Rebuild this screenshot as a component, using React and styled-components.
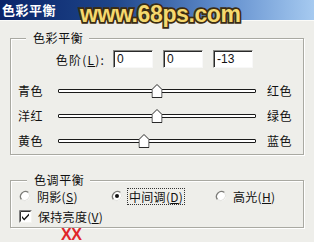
import React from "react";
import styled, { createGlobalStyle } from "styled-components";

const GlobalStyle = createGlobalStyle`
  html, body { margin: 0; padding: 0; background: #eeeeea; }
  body { font-family: "Noto Sans CJK SC", "Liberation Sans", sans-serif; font-size: 12px; color: #111; }
`;

const Window = styled.div`
  position: relative;
  width: 314px;
  height: 242px;
  overflow: hidden;
  background: #eeeeea;
  display: flex;
  flex-direction: column;
`;

const TitleBar = styled.div`
  height: 20px;
  flex: none;
  display: flex;
  align-items: center;
  padding-left: 2px;
  background: linear-gradient(to right, #0a246a 0%, #1d4488 35%, #5f8ccc 70%, #a6caf0 100%);
  border-bottom: 1px solid #fbfbf8;
  color: #fff;
  font-weight: bold;
  font-size: 13px;
  line-height: 20px;
  letter-spacing: 0.5px;
`;

const Watermark = styled.div`
  position: absolute;
  left: 80px;
  top: 1px;
  font-family: "Liberation Sans", Arial, sans-serif;
  font-weight: bold;
  font-size: 23px;
  letter-spacing: -0.4px;
  color: #f5d86e;
  -webkit-text-stroke: 3.5px #3b2c12;
  paint-order: stroke fill;
  pointer-events: none;
`;

const RedMark = styled.div`
  position: absolute;
  left: 61px;
  top: 226px;
  font-family: "Liberation Sans", Arial, sans-serif;
  font-weight: bold;
  font-size: 16px;
  color: #e0262a;
  letter-spacing: -0.5px;
`;

const Body = styled.div`
  padding: 10px 10px 0 10px;
  display: flex;
  flex-direction: column;
  gap: ${(p) => p.$gap}px;
`;

const Group = styled.fieldset`
  margin: 0;
  min-width: 0;
  padding: ${(p) => p.$pad};
  border: 1px solid #a9a9a2;
  box-shadow: inset 1px 1px 0 #ffffff, 1px 1px 0 #ffffff;
`;

const Legend = styled.legend`
  position: relative;
  margin-left: 8px;
  padding: 0 6px 0 7px;
  background: #eeeeea;
  font-size: 12px;
  line-height: 14px;
  letter-spacing: 0.6px;
`;

const LevelsRow = styled.div`
  display: flex;
  align-items: center;
  height: 18px;
  gap: 10px;
`;

const LevelsLabel = styled.span`
  width: 87px;
  text-align: right;
  margin-right: -2px;
  letter-spacing: 1.2px;
  white-space: nowrap;
`;

const Field = styled.div`
  width: 40px;
  height: 18px;
  box-sizing: border-box;
  background: #fff;
  border: 1px solid;
  border-color: #8a8a86 #f8f8f8 #f8f8f8 #8a8a86;
  box-shadow: inset 1px 1px 0 #2a2a2a;
  font-family: "Liberation Sans", Arial, sans-serif;
  font-size: 12px;
  line-height: 16px;
  padding-left: 3px;
  color: #111;
`;

const Sliders = styled.div`
  margin-top: 10px;
  display: flex;
  flex-direction: column;
`;

const SliderRow = styled.div`
  display: grid;
  grid-template-columns: 29px 198px auto;
  column-gap: 11px;
  align-items: center;
  height: 25px;
`;

const Track = styled.div`
  position: relative;
  height: 4px;
  box-sizing: border-box;
  background: #fff;
  border: 1px solid #1a1a1a;
  border-top-width: 1.5px;
  border-radius: 1px;
`;

const Thumb = styled.svg`
  position: absolute;
  top: 50%;
  transform: translate(-50%, -50%);
  width: 11px;
  height: 14px;
  display: block;
`;

const Side = styled.span`
  letter-spacing: 0.6px;
  white-space: nowrap;
`;

const Key = styled.span`
  text-decoration: underline;
  text-underline-offset: 1px;
`;

const ToneRow = styled.div`
  display: grid;
  grid-template-columns: 92px 104px auto;
  align-items: center;
  height: 18px;
  margin-top: 0px;
`;

const Option = styled.label`
  display: flex;
  align-items: center;
  gap: ${(p) => p.$gap || 5}px;
`;

const OptionText = styled.span`
  padding: 0 1px;
  line-height: 15px;
  letter-spacing: 0.3px;
  white-space: nowrap;
  outline: ${(p) => (p.$focus ? "1px dotted #333" : "none")};
  outline-offset: 0px;
`;

const CheckRow = styled.div`
  display: flex;
  align-items: center;
  height: 18px;
  margin-top: 2px;
`;

const Icon = styled.svg`
  display: block;
  flex: none;
`;

function Radio({ checked }) {
  return (
    <Icon width="12" height="12" viewBox="0 0 12 12">
      <circle cx="6" cy="6" r="5" fill="#fff" />
      <path d="M9.5 2.5 A5 5 0 0 0 2.5 9.5" fill="none" stroke="#7c7c78" strokeWidth="1.3" />
      <path d="M2.5 9.5 A5 5 0 0 0 9.5 2.5" fill="none" stroke="#e2e2de" strokeWidth="1" />
      {checked && <circle cx="6" cy="6" r="2" fill="#111" />}
    </Icon>
  );
}

function Check() {
  return (
    <Icon width="13" height="13" viewBox="0 0 13 13">
      <rect x="0.5" y="0.5" width="12" height="12" fill="#fff" stroke="#f4f4f0" />
      <path d="M0.5 12.5 V0.5 H12.5" fill="none" stroke="#808080" />
      <path d="M1.5 11.5 V1.5 H11.5" fill="none" stroke="#333" />
      <path d="M3 6 L5.2 8.4 L10 3.4 L10 5.4 L5.2 10.4 L3 8 Z" fill="#111" />
    </Icon>
  );
}

function Slider({ left, right, value }) {
  const pct = ((value + 100) / 200) * 100;
  return (
    <SliderRow>
      <Side>{left}</Side>
      <Track>
        <Thumb viewBox="0 0 11 14" style={{ left: `${pct}%` }}>
          <polygon points="5.5,0.5 10.5,5.5 10.5,13.5 0.5,13.5 0.5,5.5" fill="#fff" stroke="#2a2a2a" />
        </Thumb>
      </Track>
      <Side>{right}</Side>
    </SliderRow>
  );
}

export default function App() {
  return (
    <>
      <GlobalStyle />
      <Window>
        <TitleBar>色彩平衡</TitleBar>
        <Body $gap={18}>
          <Group $pad="5px 7px 1px 7px">
            <Legend>色彩平衡</Legend>
            <LevelsRow>
              <LevelsLabel>
                色阶(<Key>L</Key>):
              </LevelsLabel>
              <Field>0</Field>
              <Field>0</Field>
              <Field>-13</Field>
            </LevelsRow>
            <Sliders>
              <Slider left="青色" right="红色" value={0} />
              <Slider left="洋红" right="绿色" value={0} />
              <Slider left="黄色" right="蓝色" value={-13} />
            </Sliders>
          </Group>
          <Group $pad="0 7px 2px 8px">
            <Legend>色调平衡</Legend>
            <ToneRow>
              <Option>
                <Radio />
                <OptionText>
                  阴影(<Key>S</Key>)
                </OptionText>
              </Option>
              <Option>
                <Radio checked />
                <OptionText $focus>
                  中间调(<Key>D</Key>)
                </OptionText>
              </Option>
              <Option>
                <Radio />
                <OptionText>
                  高光(<Key>H</Key>)
                </OptionText>
              </Option>
            </ToneRow>
            <CheckRow>
              <Option $gap={5}>
                <Check />
                <OptionText>
                  保持亮度(<Key>V</Key>)
                </OptionText>
              </Option>
            </CheckRow>
          </Group>
        </Body>
        <Watermark>www.68ps.com</Watermark>
        <RedMark>XX</RedMark>
      </Window>
    </>
  );
}
